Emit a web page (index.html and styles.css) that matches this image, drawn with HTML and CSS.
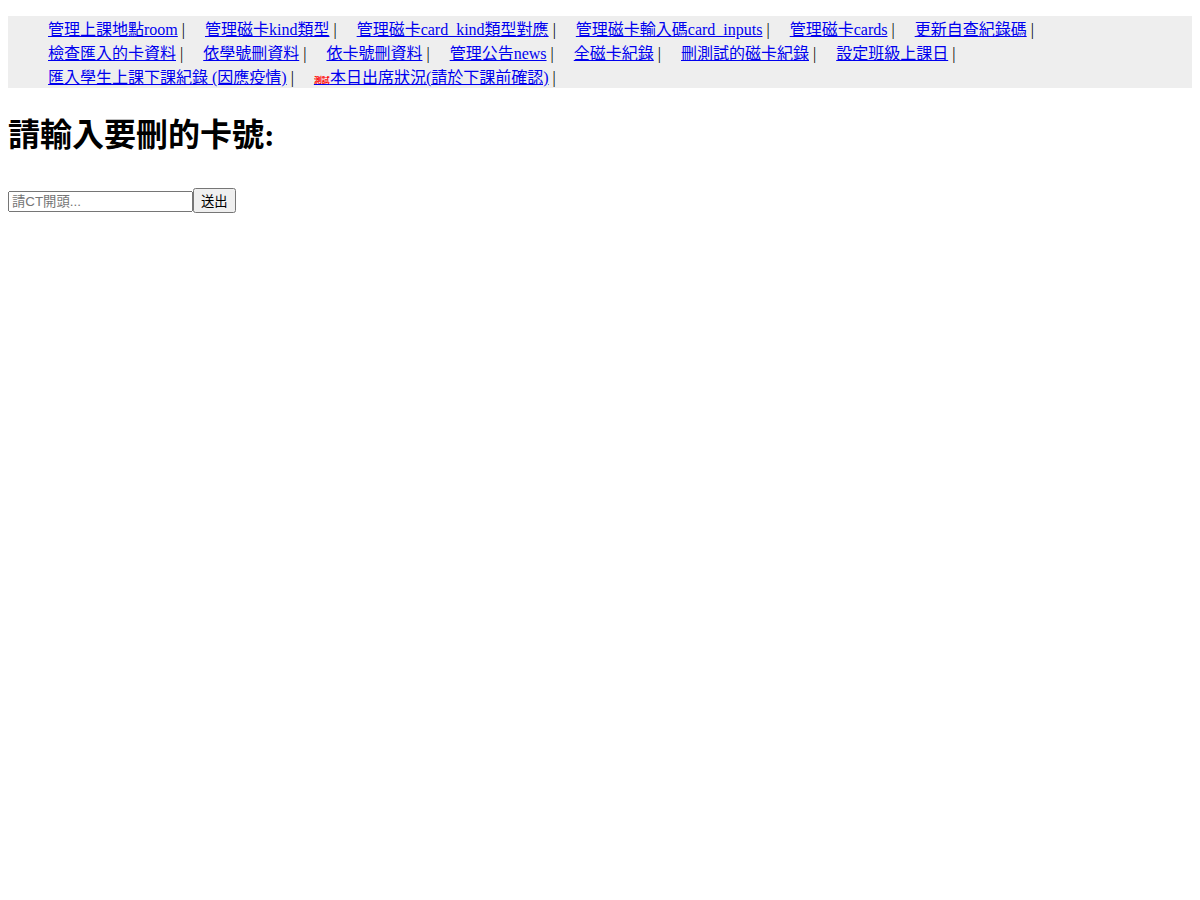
FILE: index.html
```html
<!DOCTYPE html>
<html lang="en">
  <head>
    <meta charset="UTF-8" />
    <meta name="viewport" content="width=device-width, initial-scale=1.0" />
    <title>Document</title>
    <link rel="stylesheet" href="styles.css">
  </head>
  <body>
    <ul class="menu">
      <li><a href="#">管理上課地點room</a> | </li>
      <li><a href="#">管理磁卡kind類型</a> | </li>
      <li><a href="#">管理磁卡card_kind類型對應</a> | </li>
      <li><a href="#">管理磁卡輸入碼card_inputs</a> | </li>
      <li><a href="#">管理磁卡cards</a> | </li>
      <li><a href="#">更新自查紀錄碼</a> | </li>
      <br />
      <li><a href="#">檢查匯入的卡資料</a> | </li>
      <li><a href="#">依學號刪資料</a> | </li>
      <li><a href="#">依卡號刪資料</a> | </li>
      <li><a href="#">管理公告news</a> | </li>
      <li><a href="#">全磁卡紀錄</a> | </li>
      <li><a href="#">刪測試的磁卡紀錄</a> | </li>
      <li><a href="#">設定班級上課日</a> | </li>
      <br />
      <li><a href="#">匯入學生上課下課紀錄 (因應疫情)</a> | </li>
      <li><a href="#"><span class="tag">測試</span>本日出席狀況(請於下課前確認)</a> | </li>
    </ul>
    <h1 class="title">請輸入要刪的卡號:</h1>
    <form class="search">
      <input class="card-input" type="text" placeholder="請CT開頭..." /><button class="send" type="button">送出</button>
    </form>
  </body>
</html>
```

FILE: styles.css
```css
body {
  margin: 0;
  padding: 8px;
  font-family: "Liberation Serif", "Noto Sans CJK JP", serif;
  font-size: 16px;
}
.menu {
  margin: 8px 0 16px;
  padding-left: 40px;
  background-color: #eeeeee;
  list-style: none;
}
.menu li {
  display: inline;
  margin-right: 16px;
}
.tag {
  font-size: 8px;
  font-weight: bold;
  color: red;
}
.title {
  font-size: 32px;
  margin: 21px 0 33px;
}
.card-input {
  width: 185px;
  box-sizing: border-box;
  font-family: "Liberation Sans", "Noto Sans CJK JP", sans-serif;
}
.send {
  font-family: "Liberation Sans", "Noto Sans CJK JP", sans-serif;
}
```
